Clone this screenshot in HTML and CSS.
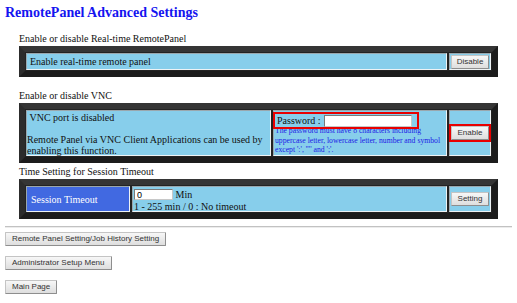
FILE: index.html
```html
<!DOCTYPE html>
<html>
	<head>
		<meta charset="UTF-8">
		<title>RemotePanel Advanced Settings</title>
		<link rel="stylesheet" href="styles.css">
	</head>
	<body>
		<div class="page">
			<h1 class="title">RemotePanel Advanced Settings</h1>

			<div class="section first">
				<div class="caption">Enable or disable Real-time RemotePanel</div>
				<div class="panel p1">
					<div class="cell main">Enable real-time remote panel</div>
					<div class="cell act"><button class="btn">Disable</button></div>
				</div>
			</div>

			<div class="section second">
				<div class="caption">Enable or disable VNC</div>
				<div class="panel p2">
					<div class="cell vnc">
						<div>&nbsp;VNC port is disabled</div>
						<div>&nbsp;</div>
						<div>Remote Panel via VNC Client Applications can be used by enabling this function.</div>
					</div>
					<div class="cell pass">
						<div class="mark pwbox">
							<span>Password :</span>
							<input class="txt pw" type="password">
						</div>
						<div class="hint">The password must have 8 characters including uppercase letter, lowercase letter, number and symbol except ':', '"' and ';'.</div>
					</div>
					<div class="cell act"><span class="mark"><button class="btn">Enable</button></span></div>
				</div>
			</div>

			<div class="section third">
				<div class="caption">Time Setting for Session Timeout</div>
				<div class="panel p3">
					<div class="cell head">Session Timeout</div>
					<div class="cell timeout">
						<div><input class="txt min" type="text" value="0"> Min</div>
						<div>1 - 255 min / 0 : No timeout</div>
					</div>
					<div class="cell act"><button class="btn">Setting</button></div>
				</div>
			</div>

			<div class="rule"></div>

			<div class="links">
				<button class="btn big">Remote Panel Setting/Job History Setting</button>
				<button class="btn big">Administrator Setup Menu</button>
				<button class="btn big">Main Page</button>
			</div>
		</div>
	</body>
</html>
```

FILE: styles.css
```css
body{
	margin: 0;
	font-family: "Liberation Serif", "Times New Roman", serif;
	color: #111;
	background: #fff;
}
.page{
	padding: 0 5px;
}
.title{
	margin: 4px 0 0;
	font-size: 14px;
	line-height: 18px;
	font-weight: bold;
	color: #1414f0;
}
.section{
	margin-left: 14px;
	width: 479px;
}
.first{
	margin-top: 11px;
}
.second{
	margin-top: 13px;
}
.third{
	margin-top: 3px;
}
.caption{
	font-size: 10px;
	line-height: 12px;
	margin-bottom: 1px;
}
.panel{
	display: flex;
	gap: 2px;
	padding: 1px;
	border: 6px solid;
	border-color: #353535 #1c1c1c #1c1c1c #2c2c2c;
	background: #232323;
	font-size: 10px;
}
.p1{
	height: 17px;
}
.p2{
	height: 46px;
}
.p3{
	height: 26px;
}
.cell{
	box-sizing: border-box;
	background: #87ceeb;
	border: 1px solid;
	border-color: #9aa7ad #eef3f5 #eef3f5 #9aa7ad;
}
.main{
	flex: 1;
	display: flex;
	align-items: center;
	padding-left: 3px;
}
.act{
	width: 42px;
	display: flex;
	align-items: center;
	justify-content: center;
}
.vnc{
	width: 245px;
	line-height: 11px;
	padding: 1px 0 0;
}
.pass{
	flex: 1;
	padding: 0;
}
.mark{
	border: 2px solid #e80000;
	display: flex;
	position: relative;
	z-index: 1;
}
.pwbox{
	width: 140px;
	margin: 1px 0 -3px -1px;
	height: 13px;
	align-items: center;
	gap: 3px;
	padding-left: 2px;
	font-size: 10px;
}
.hint{
	font-size: 7.7px;
	line-height: 9.5px;
	color: #2020e6;
	padding: 0 2px 0 1px;
}
.head{
	width: 104px;
	background: #4169e1;
	color: #fff;
	display: flex;
	align-items: center;
	padding-left: 4px;
}
.timeout{
	flex: 1;
	padding: 2px 0 0 1px;
	line-height: 12px;
}
.txt{
	box-sizing: border-box;
	margin: 0;
	padding: 0 2px;
	border: 1px solid;
	border-color: #7a7a7a #c8c8c8 #c8c8c8 #7a7a7a;
	background: #fff;
	font: 9px "Liberation Sans", Arial, sans-serif;
	vertical-align: top;
}
.pw{
	width: 88px;
	height: 12px;
}
.min{
	width: 39px;
	height: 11px;
}
.btn{
	box-sizing: border-box;
	margin: 0;
	height: 14px;
	padding: 0 5px;
	font: 8px/12px "Liberation Sans", Arial, sans-serif;
	color: #333;
	background: linear-gradient(#f7f7f7, #dedede);
	border: 1px solid;
	border-color: #c4c4c4 #8e8e8e #8e8e8e #c4c4c4;
	border-radius: 1px;
}
.act .btn{
	width: 38px;
	padding: 0;
}
.rule{
	margin: 7px 0 0;
	height: 0;
	border-top: 1px solid #c2c2c2;
	border-bottom: 1px solid #ececec;
}
.links{
	display: flex;
	flex-direction: column;
	align-items: flex-start;
	gap: 10px;
	margin-top: 4px;
}
.big{
	padding: 0 6px;
}
```
